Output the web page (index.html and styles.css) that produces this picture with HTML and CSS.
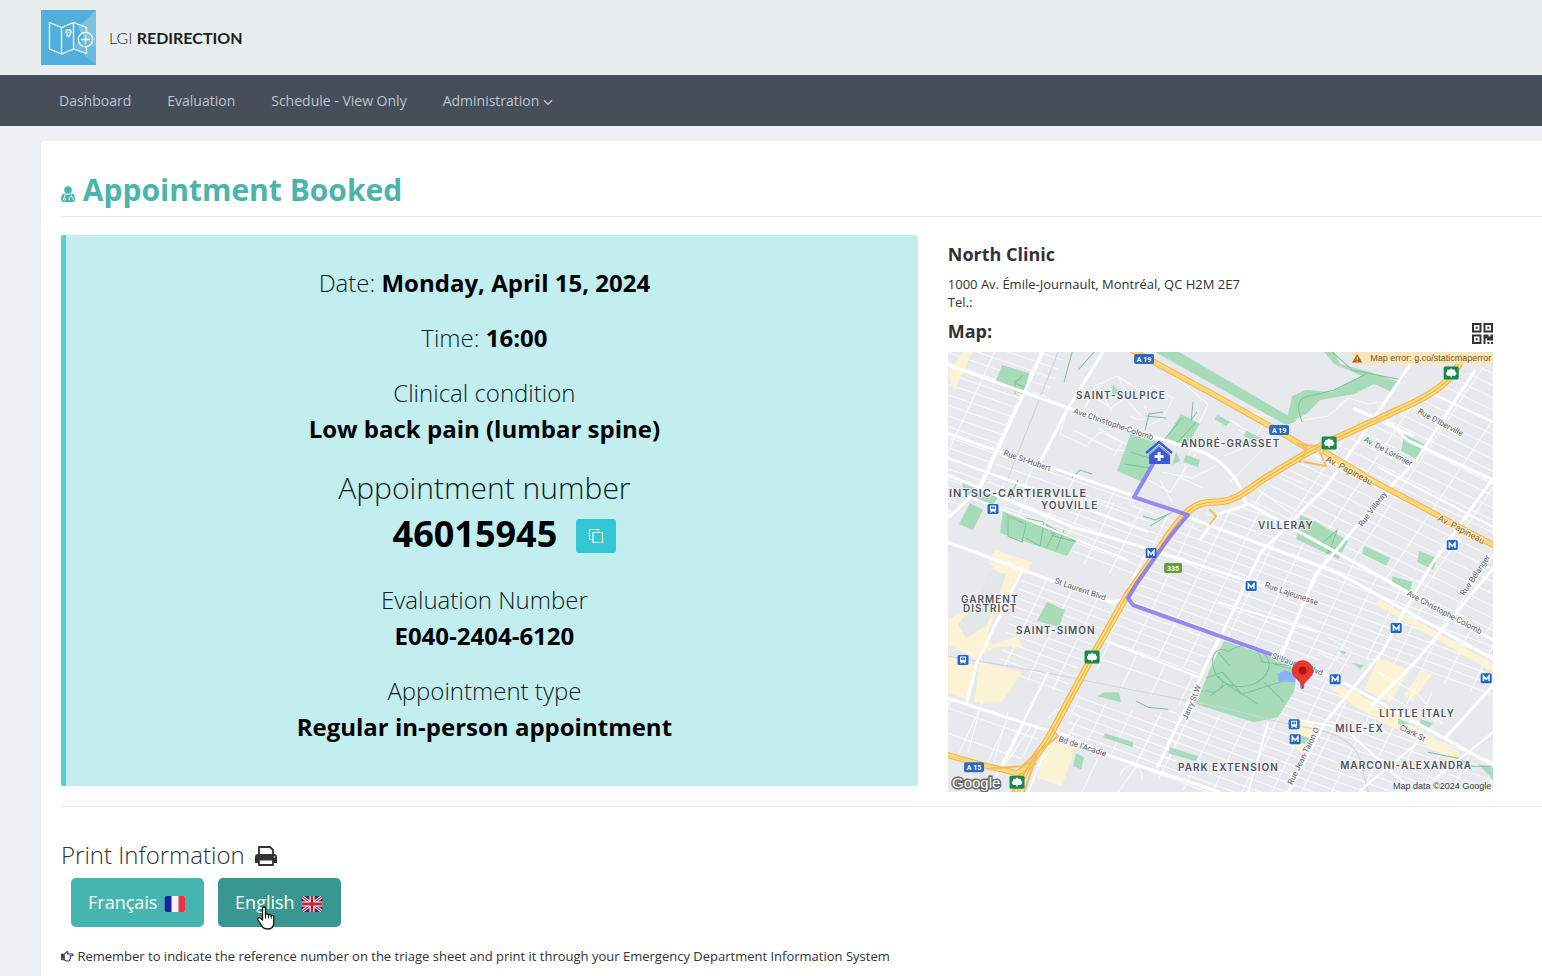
FILE: index.html
```html
<!DOCTYPE html>
<html lang="en">
<head>
<meta charset="utf-8">
<meta name="viewport" content="width=device-width, initial-scale=1">
<title>LGI Redirection - Appointment Booked</title>
<link rel="stylesheet" href="styles.css">
</head>
<body>
<header class="brand-bar">
  <a class="brand" href="#">
    <svg class="brand-logo" viewBox="0 0 55 55" aria-hidden="true">
      <path fill="#50afdc" d="M0 0h55v55H0z"/>
      <path fill="#7bc2e2" d="M55 0v40L43 28 37 17z"/>
      <path fill="#69b9df" d="M55 39v16L32 36l12-8z"/>
      <g fill="none" stroke="#fff" stroke-width="1.300" stroke-linejoin="round">
        <path d="M45.500 22V17.500L32.500 12.500l-12 5-12-5V39l12 5 12-5 13 4.500V37M20.500 17.500V44M32.500 12.500V39"/>
        <path d="M27.500 27c-1.300-2.200-2.500-3.400-2.500-4.800a2.500 2.500 0 0 1 5 0c0 1.400-1.200 2.600-2.500 4.800z"/>
        <circle cx="44.500" cy="29.500" r="7.200"/>
        <path d="M44.500 25v9M40 29.500h9"/>
      </g>
      <circle cx="27.500" cy="22.400" r=".8" fill="#fff"/>
    </svg>
    <span class="brand-name">LGI <b>REDIRECTION</b></span>
  </a>
</header>
<nav class="main-nav">
  <a href="#">Dashboard</a>
  <a href="#">Evaluation</a>
  <a href="#">Schedule - View Only</a>
  <a href="#">Administration
    <svg class="caret" viewBox="0 0 8 6" aria-hidden="true"><path d="M.5 1l3.500 3.500L7.500 1" fill="none" stroke="currentColor" stroke-width="1.200"/></svg>
  </a>
</nav>
<main class="card">
  <h1 class="page-title">
    <svg class="title-icon" viewBox="0 0 14 16" aria-hidden="true">
      <circle cx="7" cy="4" r="3.800" fill="currentColor"/>
      <path fill="currentColor" d="M3.200 7.200C1 7.800 0 10 0 13c0 2 1 3 2.500 3h9c1.500 0 2.500-1 2.500-3 0-3-1-5.200-3.200-5.800C8.500 9.200 5.500 9.200 3.200 7.200z"/>
      <path d="M3.500 8.500v3.200M10.500 8.500v2M8.200 14.200v-2c0-2.200 4-2.200 4 0v2" fill="none" stroke="#fff" stroke-width="1"/>
      <circle cx="3.500" cy="13" r="1.200" fill="none" stroke="#fff" stroke-width=".9"/>
    </svg>
    Appointment Booked
  </h1>
  <div class="columns">
    <section class="summary">
      <p>Date: <b>Monday, April 15, 2024</b></p>
      <p>Time: <b>16:00</b></p>
      <p>Clinical condition<br><b>Low back pain (lumbar spine)</b></p>
      <div class="number">
        <p class="number-label">Appointment number</p>
        <div class="number-row">
          <b>46015945</b>
          <button class="copy" type="button" aria-label="Copy appointment number">
            <svg viewBox="0 0 16 16" aria-hidden="true"><path d="M4.500 11.500h-3v-10h9v3M5 4.500h9.500v10H5z" fill="none" stroke="currentColor" stroke-width="1.200"/></svg>
          </button>
        </div>
      </div>
      <p>Evaluation Number<br><b>E040-2404-6120</b></p>
      <p>Appointment type<br><b>Regular in-person appointment</b></p>
    </section>
    <section class="clinic">
      <h2>North Clinic</h2>
      <address>1000 Av. Émile-Journault, Montréal, QC H2M 2E7<br>Tel.:</address>
      <div class="map-head">
        <h2>Map:</h2>
        <svg class="qr" viewBox="0 0 21 21" aria-hidden="true">
          <path fill="none" stroke="#333" stroke-width="2" d="M1 1h7.500v7.500H1zM12.500 1H20v7.500h-7.500zM1 12.500h7.500V20H1z"/>
          <path fill="#333" d="M3.700 3.700h2v2h-2zM15.300 3.700h2v2h-2zM3.700 15.300h2v2h-2zM11.500 11.500h5v2h2v-2H21v6h-6v-2h-1.500V21h-2zM15.500 19h2v2h-2zM19 19h2v2h-2z"/>
        </svg>
      </div>
      <svg class="map" viewBox="0 0 545 440" role="img" aria-label="Route map to North Clinic">
        <defs>
          <pattern id="blocks-west" width="42" height="10" patternUnits="userSpaceOnUse" patternTransform="rotate(19) skewX(-6)"><path class="lane" d="M0 .5h42M.5 0v10"/></pattern>
          <pattern id="blocks-mid" width="27" height="9" patternUnits="userSpaceOnUse" patternTransform="rotate(20) skewX(-6)"><path class="lane" d="M0 .5h27M.5 0v9"/></pattern>
          <pattern id="blocks-east" width="38" height="11" patternUnits="userSpaceOnUse" patternTransform="rotate(26) skewX(-8)"><path class="lane" d="M0 .5h38M.5 0v11"/></pattern>
          <pattern id="blocks-wide" width="30" height="24" patternUnits="userSpaceOnUse" patternTransform="rotate(19) skewX(-6)"><path class="lane" d="M0 .5h30M.5 0v24"/></pattern>
          <g id="leaf">
            <rect x="-7.500" y="-6.500" width="15" height="13" rx="1.500" fill="#16894f"/>
            <path fill="#fff" d="M0-4.800l1.600 1.600 2.200-.2.100 1.800L5.400.2 4 2.800H.7v1.600H-.7V2.800H-4L-5.400.2l1.500-1.800.1-1.800 2.200.2z"/>
          </g>
          <g id="metro">
            <rect x="-5.500" y="-5" width="11" height="10" rx="1.500" fill="#1f66cc"/>
            <path d="M-2.800 2.800v-5L0 1.200l2.800-3.400v5" fill="none" stroke="#fff" stroke-width="1.500"/>
          </g>
          <g id="train">
            <rect x="-5.500" y="-5" width="11" height="10" rx="1.500" fill="#1f66cc"/>
            <path fill="#fff" d="M-3-3.500h6v5.500h-1l1 1.500H1.500L1 2.500h-2l-.5 1H-3L-2 2h-1z"/>
            <path fill="#1f66cc" d="M-2-2.500h1.700V0H-2zM.3-2.500H2V0H.3z"/>
          </g>
        </defs>
        <path fill="#e7e9ec" d="M0 0h545v440H0z"/>

        <path fill="url(#blocks-west)" d="M0 0h95L32 136 0 166z"/>
        <path fill="url(#blocks-west)" d="M95 0h22L97 48l-14-6zM36 134l18-36 46 18 88 30-12 18-130-40z"/>
        <path fill="url(#blocks-mid)" d="M40 128l190 34-46 68-54-20-90-52zM75 220l95 30-56 92-66-26z"/>
        <path fill="url(#blocks-mid)" d="M180 246l90 34-22 42-92-34zM122 340l140 40-50 36-92-34z"/>
        <path fill="url(#blocks-wide)" d="M155 288l98 38-12 32-94-34zM0 348l96 32-34 40-62-20z"/>
        <path fill="url(#blocks-east)" d="M500 28l45-16v270l-150-76-96-56 60-46 110-52z"/>
        <path fill="url(#blocks-mid)" d="M240 166l57-14 248 136v60l-120-40-85 0-140-46-18-32z"/>
        <path fill="url(#blocks-mid)" d="M347 312l198 96v32H240l-80-38 50-42 40-4 64 18z"/>

        <g fill="#fcf2d4">
          <path d="M40 210l32 6-10 24-14 20-8 20 4 18-18 8-26-14v-24l16-10 10 8 20-24 4-22z"/>
          <path d="M0 304l28 10-6 34-22-8zM32 310l42 10-20 30-28 0zM48 198l36 12-6 12-38-14zM98 386l30 8-14 40-24-8zM70 284l4 10-40 2zM0 22l14-22h10L6 40z"/>
          <path d="M430 306l32 12-20 32-26-12zM432 248l113 64v8l-118-68zM380 334l24 4 88 52 20 10-6 8-100-54zM352 370l24 6-22 24-12-8zM456 342l18-24 10 4-20 28z"/>
        </g>
        <path fill="#e4e7ea" d="M42 218l16 4-10 30-10 22-20 12-8-14 14-16 10-18z"/>

        <g class="thin">
          <path d="M120 56l-8 26 26 12 14-14 26 12M135 60l12-26 22-10 28 18 8-8 20 12-10 20-30 16M145 44l18 12 14-10 16 18M150 34l14 26M170 24l10 22M182 64c14 8 22 0 14-10M125 78l40 20 40 2M150 76l24 14-8 14M200 128l22 12 28-42M214 120l30 6 24-12M222 20l38 32-12 26M224 150l-12-22M243 96l-10 30 22 10M282 68l26 16 10-16M290 78l34 10-42 42M276 104l60-26M300 130l44 32M320 116l36 16M0 400l60 20M34 350l-14 50M60 360l-14 50M84 372l-40 60M100 366l14-12 18 10-12 20M172 424c4-16 24-14 22 4M150 406l-16 34M190 412l-20 28"/>
          <path d="M380 285l24 14-20 34M370 300l30 14M362 314l26 14M395 292l-22 38M430 320l40 22 24 30M440 344l50 26M470 330l-24 46M484 340l-22 46M300 60l46 10 34-6 20-18 20 6 14-2"/>
        </g>

        <g fill="#a8dbb9">
          <path d="M54 13l27 8-5 22-29-12z"/>
          <path d="M207 0h24l118 69-11 4z"/>
          <path d="M376 0h10l6 12 30 8 28 10-6 10-18-8-20 10-34 6-14 14-20 10 6-28 14-6 26 2 30-16-28-12z"/>
          <path d="M233 62l19 10-14 22-20-8zM183 81l26 8-12 42-28-12zM228 99l4 10-8 4zM238 103l14 5-2 7-15-5zM165 32l6 8-8 4z"/>
          <path d="M55 158l74 28-10 18-67-23zM22 151l13 7-10 20-14-6zM14 130l16 6 20 10-6 8-28-14z"/>
          <path d="M99 250l18 8-6 17-22-6z"/>
          <path d="M352 163l18 8 30 18-10 18-42-20zM416 194l26 12-4 8-24-12zM471 199l18 7-4 12-16-8zM456 82l20 10-5 17-18-10zM418 28l14-3-2 8zM444 224l20 6-2 10-18-10zM298 78l14 8-6 4-10-6zM270 63l12 7-4 4-12-7z"/>
          <path d="M276 289l74 24-4 26-16 26-24 5-58-18 14-36z"/>
          <path d="M156 340l15 0 2 10-24-6zM157 381l28 9v5l-30-10zM222 395l28 9-2 5-28-8zM128 401l8 4-3 12-8-3zM350 382l12 4-5 6-10-4zM404 311l12 2-4 4zM390 298l8 2-2 3zM473 367l12 4-6 6-8-4zM462 372l-12-6v6zM530 412l15 4v12z"/>
        </g>
        <g class="trail">
          <path d="M67 28v14M75 23l-8 8 9 4M60 164l18 8-4 18-14-6zM78 166l18 4-4 24-14-8M98 172l30 18-22-6zM98 196l10-18M108 198l8-20M182 100l20 6 2 10-28-4M214 90l20-24M228 92l20-22M215 60l-14 2-4 16M218 66l-20-2M245 50l-2 18 6-8M195 164l12 4 18-8M202 174l16-10M375 190l14-12-8 22zM392 192l-14 10M130 18l16-18M116 30l8-30M70 128l-8 18M124 126l8-8 12 4M354 70c-8-20-2-26 12-27l20-5 32-16M384 0l20 18 50 10"/>
          <path d="M280 300c22-18 50 4 38 22s-46 16-52-4 8-24 14-18zM270 300l12 14M258 326l16-6 20 22 44-14M262 344l16-12 32 20M308 294l6 16 32 4M316 330l20 20M258 338c10 8 24-8 12-14M326 312l22 6M480 400l30 6 14 8 20 0M188 349l12 6 20 2"/>
        </g>
        <path fill="#89b3f5" d="M329 322l8-4 10 4v8l-16-1z"/>

        <path class="rail" d="M0 304l90 15 90 18 98 19M278 356l62 16c42 6 70 14 74 44l6 24M110 0L60 126"/>

        <g class="road">
          <path d="M95 0L32 136 0 166M155 0l-35 56-28 54M0 13l120 43M120 56l89 30 40 12c26 8 44 32 48 52l100 55 148 83"/>
          <path d="M0 81l32 12 73 23 84 29 51 20 32 12 120 45 153 85M0 123l125 52 74 21 110 36 58 18"/>
          <path d="M0 190l75 28 90 32 15-5M267 281l80 29 53 23 145 80M0 346l92 30 26 7 42 20 112 37"/>
          <path d="M272 283l-63 133M267 296l46-96 34-34 30-30 36-51 54-80M334 303l33-80 70-83 30-30 60-92M377 370l57-70 20-37 29-50 62-87M340 440l37-70M545 216l-78 94-43 43M545 333l-48 53M75 216L29 310l-10 40M75 372l-24 48M300 152l-30 10-18 26M437 66l22 22 86 40M405 56l60 28"/>
        </g>
        <g class="road slim">
          <path d="M0 106l200 74M0 136l180 72M40 440l60-120M155 288l98 38M100 392l-20 48M352 368l44 8 70 64M270 250l100 30M300 440l20-70M430 115l115 60M360 100l60 28M480 40l65 30M410 440l60-50M470 440l75-60M200 196l-20 40"/>
        </g>

        <g fill="none" stroke-linecap="round" stroke-linejoin="round">
          <path stroke="#eeb24a" stroke-width="7" d="M514 6c-10 22-24 32-47 44l-87 40-23 12-40 24c-16 10-28 24-50 24-20 0-30 6-58 50l-30 43-34 60-43 80c-10 20-26 28-33 57"/>
          <path stroke="#ffdb7f" stroke-width="5" d="M514 6c-10 22-24 32-47 44l-87 40-23 12-40 24c-16 10-28 24-50 24-20 0-30 6-58 50l-30 43-34 60-43 80c-10 20-26 28-33 57"/>
          <path stroke="#eeb24a" stroke-width="1" d="M514 6c-10 22-24 32-47 44l-87 40-23 12-40 24c-16 10-28 24-50 24-20 0-30 6-58 50l-30 43-34 60-43 80c-10 20-26 28-33 57"/>
          <path stroke="#f0b54f" stroke-width="6" d="M184-2l88 48 48 27 37 22M0 403l35 10 34 8 16-10M545 193l-118-63-50-30"/>
          <path stroke="#ffd777" stroke-width="4" d="M184-2l88 48 48 27 37 22M0 403l35 10 34 8 16-10M545 193l-118-63-50-30"/>
          <path stroke="#f3bd5c" stroke-width="2" d="M350 92c10 2 8 10 2 18M352 92l28 4M372 100l6 14-22-4M104 376l6 8-20 16-14 40M96 394l-22 20-30 2M90 400l-26 40M262 158l6 6-6 8"/>
          <path stroke="#8a7cf1" stroke-width="4" d="M205 112l-19 33 54 18c-16 16-34 44-50 66l-10 17 5 7 160 57 8 6 1 19" opacity=".9"/>
        </g>

        <g class="place">
          <text x="128" y="47">SAINT-SULPICE</text><text x="233" y="95">ANDRÉ-GRASSET</text>
          <text class="district" x="1" y="145">INTSIC-CARTIERVILLE</text><text x="93" y="157">YOUVILLE</text>
          <text x="310" y="177">VILLERAY</text><text x="13" y="251">GARMENT</text><text x="15" y="260">DISTRICT</text>
          <text x="68" y="282">SAINT-SIMON</text><text x="431" y="365">LITTLE ITALY</text>
          <text x="387" y="380">MILE-EX</text><text x="230" y="419">PARK EXTENSION</text><text x="392" y="417">MARCONI-ALEXANDRA</text>
        </g>
        <g class="street">
          <text transform="translate(125 61) rotate(19)">Ave Christophe-Colomb</text>
          <text transform="translate(55 103) rotate(19)">Rue St-Hubert</text>
          <text transform="translate(106 231) rotate(19)">St Laurent Blvd</text>
          <text transform="translate(110 389) rotate(18)">Bd de l'Acadie</text>
          <text transform="translate(469 61) rotate(28)">Rue D'Iberville</text>
          <text transform="translate(415 89) rotate(28)">Av. De Lorimier</text>
          <text transform="translate(414 175) rotate(-53)">Rue Villeray</text>
          <text transform="translate(316 235) rotate(19)">Rue Lajeunesse</text>
          <text transform="translate(458 243) rotate(28)">Ave Christophe-Colomb</text>
          <text transform="translate(516 244) rotate(-56)">Rue Bélanger</text>
          <text transform="translate(323 306) rotate(19)">St Laurent Blvd</text>
          <text transform="translate(239 368) rotate(-67)">Jarry St W</text>
          <text transform="translate(344 433) rotate(-64)">Rue Jean-Talon O</text>
          <text transform="translate(451 377) rotate(27)">Clark St</text>
        </g>
        <g class="street avenue">
          <text transform="translate(377 109) rotate(28)">Av. Papineau</text>
          <text transform="translate(489 168) rotate(28)">Av. Papineau</text>
        </g>

        <g class="shield">
          <rect x="186" y="2" width="20" height="10" rx="2"/><text x="196" y="10">A 19</text>
          <rect x="321" y="73" width="20" height="10" rx="2"/><text x="331" y="81">A 19</text>
          <rect x="16" y="410" width="20" height="10" rx="2"/><text x="26" y="418">A 15</text>
          <rect class="regional" x="216" y="211" width="18" height="10" rx="2"/><text x="225" y="219">335</text>
        </g>
        <use href="#leaf" x="503" y="21"/><use href="#leaf" x="381" y="91"/><use href="#leaf" x="144" y="305"/><use href="#leaf" x="69" y="430"/>
        <use href="#metro" x="203" y="201"/><use href="#metro" x="504" y="193"/><use href="#metro" x="303" y="234"/><use href="#metro" x="448" y="276"/><use href="#metro" x="387" y="327"/><use href="#metro" x="538" y="326"/><use href="#metro" x="347" y="387"/>
        <use href="#train" x="45" y="157"/><use href="#train" x="15" y="308"/><use href="#train" x="346" y="372"/>

        <path fill="#3d5bd9" d="M211 93l11 9v10h-21v-10z"/>
        <path fill="none" stroke="#3d5bd9" stroke-width="2.400" d="M198 101l13-11 13 11"/>
        <path fill="none" stroke="#a9b9f1" stroke-width="1" d="M200 103l11-9 11 9"/>
        <path fill="#fff" d="M209.500 100h3v3h3v3h-3v3h-3v-3h-3v-3h3z"/>
        <path fill="#e8392f" stroke="#bd251e" stroke-width=".6" d="M354.500 336c-1-8-10.500-10-10.500-17a10.500 10.500 0 0 1 21 0c0 7-9.500 9-10.500 17z"/>
        <circle cx="354.500" cy="318.500" r="4" fill="#b01414"/>

        <path fill="#f8e6b6" opacity=".9" d="M404 0h141v12H404z"/>
        <path fill="#a4671f" d="M409 2l5 8.500h-10z"/><path stroke="#fff" stroke-width="1" d="M409 5v3M409 8.800v1"/>
        <text class="notice" x="543" y="9">Map error: g.co/staticmaperror</text>
        <path fill="#eef0f2" opacity=".7" d="M440 429h105v11H440z"/>
        <text class="credit" x="543" y="437">Map data ©2024 Google</text>
        <text class="google" x="4" y="436">Google</text>
      </svg>
    </section>
  </div>
  <section class="print">
    <h2 class="print-title">Print Information
      <svg class="printer" viewBox="0 0 22 20" aria-hidden="true">
        <path fill="#2f3237" d="M0 11a3 3 0 0 1 3-3h16a3 3 0 0 1 3 3v6h-4v-4H4v4H0z"/>
        <path fill="#fff" stroke="#2f3237" stroke-width="1.800" stroke-linejoin="round" d="M4 8V1h11l3 3v4M4 13.500h14V19H4z"/>
        <path fill="#2f3237" d="M4 8h14v5H4z"/>
        <circle cx="19.500" cy="11" r=".8" fill="#fff"/>
      </svg>
    </h2>
    <div class="languages">
      <button class="lang" type="button">Français
        <svg class="flag" viewBox="0 0 21 16" aria-hidden="true"><rect width="21" height="16" rx="2" fill="#f4f4f6"/><path fill="#10259b" d="M2 0h5v16H2a2 2 0 0 1-2-2V2a2 2 0 0 1 2-2z"/><path fill="#ef3346" d="M14 0h5a2 2 0 0 1 2 2v12a2 2 0 0 1-2 2h-5z"/></svg>
      </button>
      <button class="lang lang-active" type="button">English
        <svg class="flag" viewBox="0 0 21 16" aria-hidden="true">
          <rect width="21" height="16" rx="2" fill="#233579"/>
          <path stroke="#fff" stroke-width="3" d="M1 1l19 14M20 1L1 15"/><path stroke="#d0202f" stroke-width="1.200" d="M1 1l19 14M20 1L1 15"/>
          <path stroke="#fff" stroke-width="5" d="M10.500 0v16M0 8h21"/><path stroke="#d0202f" stroke-width="2.800" d="M10.500 0v16M0 8h21"/>
        </svg>
        <svg class="pointer" viewBox="0 0 18 24" aria-hidden="true"><path fill="#fff" stroke="#111" stroke-width="1.300" stroke-linejoin="round" d="M5.500 14V2.500C5.500.5 8.500.5 8.500 2.500V9c0-1.500 3-1.500 3 .5 0-1.500 2.700-1.500 2.700.7 0-1.300 2.600-1.200 2.600 1V16c0 4-2 7-6 7-4.500 0-5.500-2-6.800-4.500L1 14c-1-2 1.300-3 2.500-1.700z"/><path d="M8.500 9v3.500M11.500 9.500v3M14.200 10.200v2.500" stroke="#111" stroke-width="1"/></svg>
      </button>
    </div>
    <p class="note">
      <svg class="hand" viewBox="0 0 14 12" aria-hidden="true"><path fill="none" stroke="#333" stroke-width="1.100" stroke-linejoin="round" d="M3.500 3.500l2.600-2.600c1-.8 1.800.4 1.300 1.300l-.6 1.100h5.400c1.300 0 1.300 2 0 2H9.800c1 .3.800 1.700 0 1.900.6.500.3 1.700-.5 1.800.4.800-.1 1.800-1.200 1.800H6l-2.500-1z"/><path fill="#333" d="M0 3h3v7H0z"/><circle cx="1.500" cy="8.500" r=".6" fill="#fff"/></svg>
      Remember to indicate the reference number on the triage sheet and print it through your Emergency Department Information System
    </p>
  </section>
</main>
</body>
</html>
```
FILE: styles.css
```css
* { box-sizing: border-box; }
body {
  margin: 0;
  min-height: 100vh;
  display: flex;
  flex-direction: column;
  background: #edf1f6;
  color: #2f3237;
  font: 13px/18px "Open Sans", sans-serif;
}
h1, h2, p { margin: 0; }
button { font: inherit; border: 0; cursor: pointer; }

.brand-bar { height: 75px; padding: 10px 41px; background: #e8edee; }
.brand { display: inline-flex; align-items: center; gap: 13px; color: #1c1e20; text-decoration: none; }
.brand-logo { width: 55px; height: 55px; }
.brand-name { font: 300 16px/20px Lato, sans-serif; }
.brand-name b { font-weight: 700; }

.main-nav { display: flex; gap: 36px; padding: 0 59px; background: #464e5a; }
.main-nav a { color: #bcc4d0; font-size: 14px; line-height: 51px; text-decoration: none; }
.caret { width: 10px; height: 7px; }

.card {
  flex: 1;
  margin: 15px 0 0 41px;
  padding: 29px 0 10px 20px;
  background: #fefefe;
  border-radius: 4px 0 0 0;
}
.page-title {
  padding-bottom: 6px;
  border-bottom: 1px solid #e7e9ec;
  color: #4ab5aa;
  font-size: 30px;
  line-height: 40px;
  font-weight: 700;
}
.title-icon { width: 14px; height: 16px; vertical-align: -1px; }

.columns {
  display: grid;
  grid-template-columns: 11fr 7fr;
  gap: 30px;
  align-items: start;
  padding: 18px 49px 14px 0;
  border-bottom: 1px solid #e7e9ec;
}
.summary {
  display: flex;
  flex-direction: column;
  gap: 19px;
  padding: 30px 15px 41px 0;
  background: #c3eef0;
  border-left: 5px solid #5bcbd1;
  border-radius: 2px 3px 3px 2px;
  color: #0b1c22;
  font-size: 24px;
  line-height: 36px;
  font-weight: 300;
  text-align: center;
}
.summary b { color: #000; font-weight: 700; }
.number { padding-bottom: 5px; }
.number-label { font-size: 30px; line-height: 44px; }
.number-row {
  display: flex;
  justify-content: center;
  align-items: center;
  gap: 19px;
  padding-left: 40px;
  font-size: 36px;
  line-height: 48px;
}
.copy { display: grid; place-items: center; width: 40px; height: 34px; margin-top: 4px; padding: 0; border-radius: 3px; background: #32c5d2; color: #e9ffff; }
.copy svg { width: 16px; height: 16px; }

.clinic { padding-top: 7px; }
.clinic h2 { font-size: 18px; line-height: 24px; font-weight: 700; }
.clinic address { padding: 9px 0 8px; font-style: normal; }
.map-head { display: flex; justify-content: space-between; align-items: flex-end; padding-bottom: 8px; }
.map-head h2 { padding-bottom: 1px; }
.qr { width: 21px; height: 21px; }
.map { display: block; width: 100%; font-family: Roboto, sans-serif; }
.lane { fill: none; stroke: #fafbfc; stroke-width: 1; }
.thin { fill: none; stroke: #fafbfc; stroke-width: 1; }
.road { fill: none; stroke: #fff; stroke-width: 3; stroke-linejoin: round; }
.slim { stroke-width: 2; }
.rail { fill: none; stroke: #cfd2d6; stroke-width: 1; }
.trail { fill: none; stroke: #7fc29b; stroke-width: 1; }
.place { fill: #505459; font-family: Inter, sans-serif; font-size: 10px; font-weight: 600; letter-spacing: 1px; paint-order: stroke; stroke: #f4f5f6; stroke-width: 2px; }
.district { font-size: 11px; }
.street { fill: #5b5f64; font-size: 8px; paint-order: stroke; stroke: #f7f8f9; stroke-width: 2px; }
.avenue { fill: #8a5a1c; font-size: 9px; stroke: #fdf0cf; }
.shield { fill: #2f6bbd; font-size: 7px; font-weight: 700; text-anchor: middle; }
.shield text { fill: #fff; }
.shield .regional { fill: #5c9e3f; }
.notice { fill: #7d5a1e; font: 9px "Liberation Sans", sans-serif; text-anchor: end; }
.credit { fill: #3f4145; font: 9px "Liberation Sans", sans-serif; text-anchor: end; }
.google { fill: #fff; stroke: #666; stroke-width: 3px; paint-order: stroke; font: 15px "Liberation Sans", sans-serif; }

.print { padding-top: 30px; }
.print-title { font-size: 24px; line-height: 36px; font-weight: 300; }
.printer { width: 22px; height: 20px; margin-left: 4px; vertical-align: -2px; }
.languages { display: flex; gap: 14px; padding: 5px 10px 20px; }
.lang { position: relative; padding: 0 18px 1px 17px; border-radius: 5px; background: #45b6af; color: #fff; font-size: 18px; line-height: 48px; }
.lang-active { background: #3a978f; }
.flag { width: 22px; height: 16px; margin-left: 2px; vertical-align: -3px; }
.pointer { position: absolute; left: 39px; top: 28px; width: 18px; height: 24px; }
.hand { width: 13px; height: 11px; vertical-align: -1px; }
```
